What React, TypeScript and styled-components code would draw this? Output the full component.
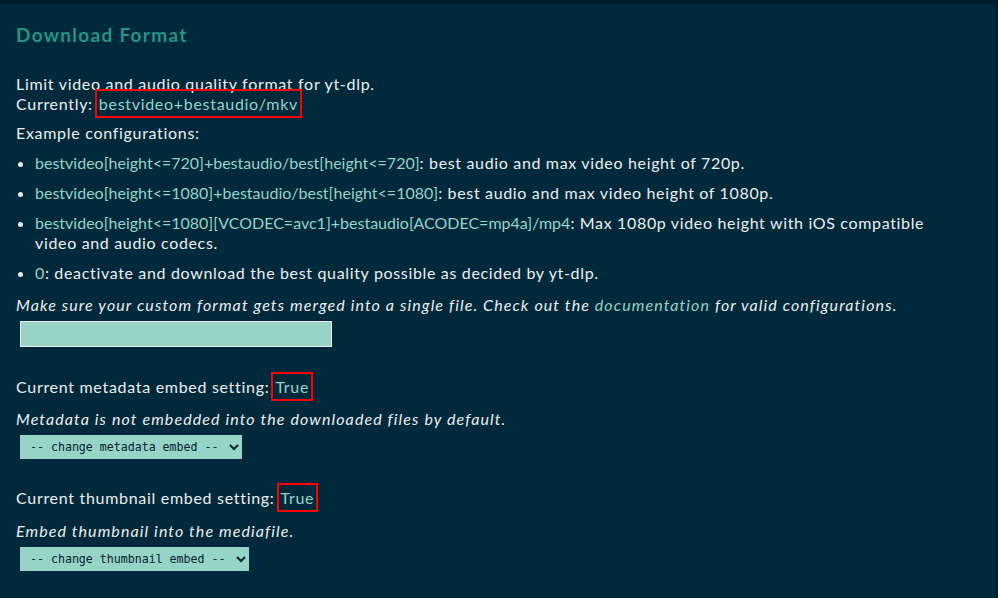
import React from "react";
import styled, { createGlobalStyle } from "styled-components";

const Global = createGlobalStyle`
  html, body { margin: 0; padding: 0; background: #00202f; }
  body { font-family: "Lato", "Noto Sans", sans-serif; color: #eeeeee; }
`;

const Page = styled.div`
  padding-top: 4px;
  padding-right: 3px;
  height: 598px;
  box-sizing: border-box;
  overflow: hidden;
`;

const Panel = styled.section`
  background: #00293b;
  height: 100%;
  padding: 19px 40px 0 16px;
  box-sizing: border-box;
`;

const Title = styled.h2`
  margin: 0 0 27px 0;
  font-size: 19px;
  line-height: 24px;
  font-weight: 700;
  color: #259485;
  letter-spacing: 1.3px;
`;

const Para = styled.p<{ $mt?: number; $italic?: boolean }>`
  margin: ${(p) => p.$mt ?? 0}px 0 0 0;
  font-size: 16px;
  line-height: 20px;
  font-style: ${(p) => (p.$italic ? "italic" : "normal")};
  letter-spacing: ${(p) => (p.$italic ? "1.1px" : "0.7px")};
`;

const Accent = styled.span<{ $tight?: boolean }>`
  color: #97d4c8;
  letter-spacing: ${(p) => (p.$tight ? "0px" : "inherit")};
`;

const Boxed = styled.span`
  color: #97d4c8;
  border: 2px solid #ff0000;
  padding: 3px 2px;
  margin-left: 2px;
`;

const List = styled.ul`
  margin: 10px 0 0 0;
  padding-left: 19px;
  font-size: 16px;
  line-height: 20px;
  letter-spacing: 0.66px;
`;

const Item = styled.li`
  margin-bottom: 10px;
  &:last-child { margin-bottom: 0; }
`;

const TextInput = styled.input`
  display: block;
  margin: 6px 0 0 4px;
  width: 312px;
  height: 26px;
  box-sizing: border-box;
  background: #97d4c8;
  border: 1px solid #eeeeee;
  outline: none;
`;

const Select = styled.select<{ $w: number }>`
  display: block;
  margin: 6px 0 0 4px;
  width: ${(p) => p.$w}px;
  height: 24px;
  background: #97d4c8;
  color: #00202f;
  border: none;
  border-radius: 0;
  font-family: "DejaVu Sans Mono", monospace;
  font-size: 11.6px;
  padding: 0 4px 0 6px;
`;

export default function App() {
  return (
    <>
      <Global />
      <Page>
        <Panel>
          <Title>Download Format</Title>
          <Para>
            Limit video and audio quality format for yt-dlp.
            <br />
            Currently:<Boxed>bestvideo+bestaudio/mkv</Boxed>
          </Para>
          <Para $mt={9}>Example configurations:</Para>
          <List>
            <Item>
              <Accent $tight>bestvideo[height&lt;=720]+bestaudio/best[height&lt;=720]</Accent>: best audio and max video height of 720p.
            </Item>
            <Item>
              <Accent $tight>bestvideo[height&lt;=1080]+bestaudio/best[height&lt;=1080]</Accent>: best audio and max video height of 1080p.
            </Item>
            <Item>
              <Accent $tight>bestvideo[height&lt;=1080][VCODEC=avc1]+bestaudio[ACODEC=mp4a]/mp4</Accent>: Max 1080p video height with iOS compatible video and audio codecs.
            </Item>
            <Item>
              <Accent>0</Accent>: deactivate and download the best quality possible as decided by yt-dlp.
            </Item>
          </List>
          <Para $mt={12} $italic>
            Make sure your custom format gets merged into a single file. Check out the <Accent>documentation</Accent> for valid configurations.
          </Para>
          <TextInput type="text" />
          <Para $mt={30}>
            Current metadata embed setting:<Boxed>True</Boxed>
          </Para>
          <Para $mt={12} $italic>
            Metadata is not embedded into the downloaded files by default.
          </Para>
          <Select $w={222} defaultValue="">
            <option value="">-- change metadata embed --</option>
          </Select>
          <Para $mt={29}>
            Current thumbnail embed setting:<Boxed>True</Boxed>
          </Para>
          <Para $mt={13} $italic>
            Embed thumbnail into the mediafile.
          </Para>
          <Select $w={229} defaultValue="">
            <option value="">-- change thumbnail embed --</option>
          </Select>
        </Panel>
      </Page>
    </>
  );
}
